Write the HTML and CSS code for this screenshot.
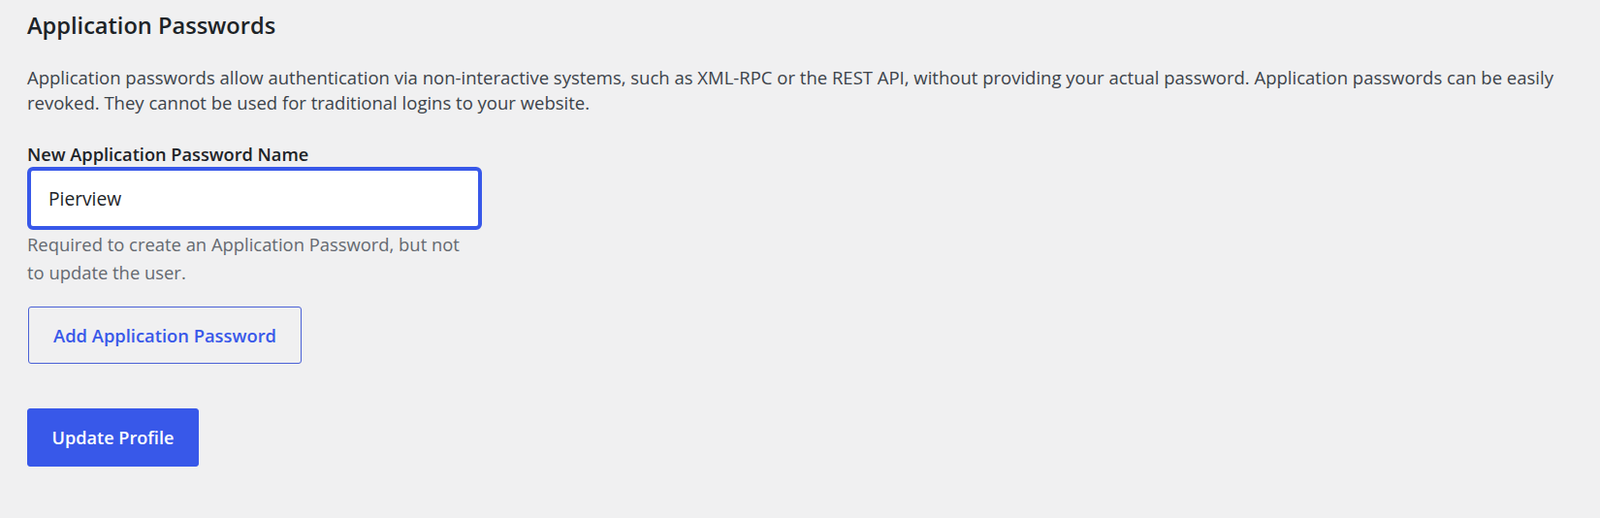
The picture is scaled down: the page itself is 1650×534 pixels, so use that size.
FILE: index.html
```html
<!DOCTYPE html>
<html lang="en">
<head>
<meta charset="utf-8">
<title>Application Passwords</title>
<link rel="stylesheet" href="styles.css">
</head>
<body>
<main class="page">
  <h2 class="section-title">Application Passwords</h2>
  <p class="intro">Application passwords allow authentication via non-interactive systems, such as XML-RPC or the REST API, without providing your actual password. Application passwords can be easily revoked. They cannot be used for traditional logins to your website.</p>
  <div class="field">
    <label class="field-label" for="app-name">New Application Password Name</label>
    <input class="field-input" id="app-name" type="text" value="Pierview">
    <p class="field-desc">Required to create an Application Password, but not to update the user.</p>
  </div>
  <button class="btn btn-secondary" type="button">Add Application Password</button>
  <div class="submit-row">
    <button class="btn btn-primary" type="submit">Update Profile</button>
  </div>
</main>
</body>
</html>
```
FILE: styles.css
```css
html, body {
  margin: 0;
  padding: 0;
  background: #f0f0f1;
}
body {
  font-family: "Open Sans", "Noto Sans", sans-serif;
  color: #3c434a;
}
.page {
  padding: 11px 40px 0 28px;
}
.section-title {
  margin: 0;
  font-size: 23.6px;
  line-height: 31px;
  font-weight: 600;
  color: #1d2327;
}
.intro {
  margin: 25px 0 0 0;
  max-width: 1590px;
  font-size: 18.5px;
  line-height: 26px;
  color: #3c434a;
}
.field {
  margin-top: 28px;
  width: 469px;
}
.field-label {
  display: block;
  font-size: 18.2px;
  line-height: 24px;
  font-weight: 600;
  color: #1d2327;
}
.field-input {
  display: block;
  box-sizing: border-box;
  width: 469px;
  height: 65px;
  margin: 1px 0 0 0;
  padding: 0 18px;
  border: 4px solid #3858e9;
  border-radius: 6px;
  background: #fff;
  font-family: inherit;
  font-size: 19.2px;
  color: #1d2327;
  outline: none;
}
.field-desc {
  margin: 0;
  max-width: 455px;
  font-size: 18.4px;
  line-height: 29px;
  color: #646970;
}
.btn {
  box-sizing: border-box;
  font-family: inherit;
  font-weight: 600;
  border-radius: 3px;
  cursor: pointer;
  padding: 0;
}
.btn-secondary {
  display: block;
  margin: 21px 0 0 1px;
  width: 282px;
  height: 59px;
  font-size: 18.35px;
  border: 1px solid #4a61d6;
  background: transparent;
  color: #3858e9;
}
.submit-row {
  margin-top: 46px;
}
.btn-primary {
  width: 177px;
  height: 60px;
  font-size: 18.1px;
  border: 1px solid #3858e9;
  background: #3858e9;
  color: #fff;
}
```
